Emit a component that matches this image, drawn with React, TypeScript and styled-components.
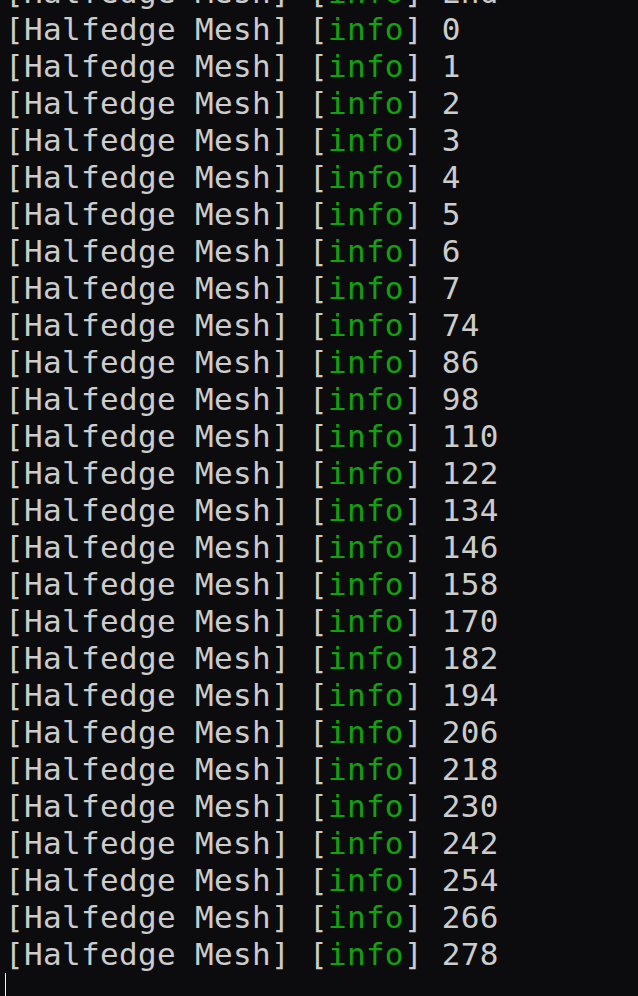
import React from "react";
import styled, { createGlobalStyle } from "styled-components";

const Global = createGlobalStyle`
  html, body {
    margin: 0;
    padding: 0;
    background: #0c0c0e;
    overflow: hidden;
  }
`;

const Screen = styled.div`
  width: 100vw;
  height: 100vh;
  overflow: hidden;
  background: #0c0c0e;
  box-sizing: border-box;
  padding-left: 5px;
`;

const Log = styled.div`
  margin-top: -26px;
  display: flex;
  flex-direction: column;
  font-family: "DejaVu Sans Mono", "Liberation Mono", monospace;
  font-size: 31px;
  letter-spacing: 0.33px;
  line-height: 37px;
  color: #cccccc;
  white-space: pre;
`;

const Line = styled.div`
  height: 37px;
`;

const Level = styled.span`
  color: #13a10e;
`;

const Cursor = styled.div`
  width: 1px;
  height: 37px;
  background: #f2f2f2;
`;

const messages: string[] = [
  "End",
  ...[0, 1, 2, 3, 4, 5, 6, 7].map(String),
  ...Array.from({ length: 18 }, (_, i) => String(74 + i * 12)),
];

export default function App() {
  return (
    <>
      <Global />
      <Screen>
        <Log>
          {messages.map((m, i) => (
            <Line key={i}>
              {"[Halfedge Mesh] ["}
              <Level>info</Level>
              {"] " + m}
            </Line>
          ))}
          <Cursor />
        </Log>
      </Screen>
    </>
  );
}
